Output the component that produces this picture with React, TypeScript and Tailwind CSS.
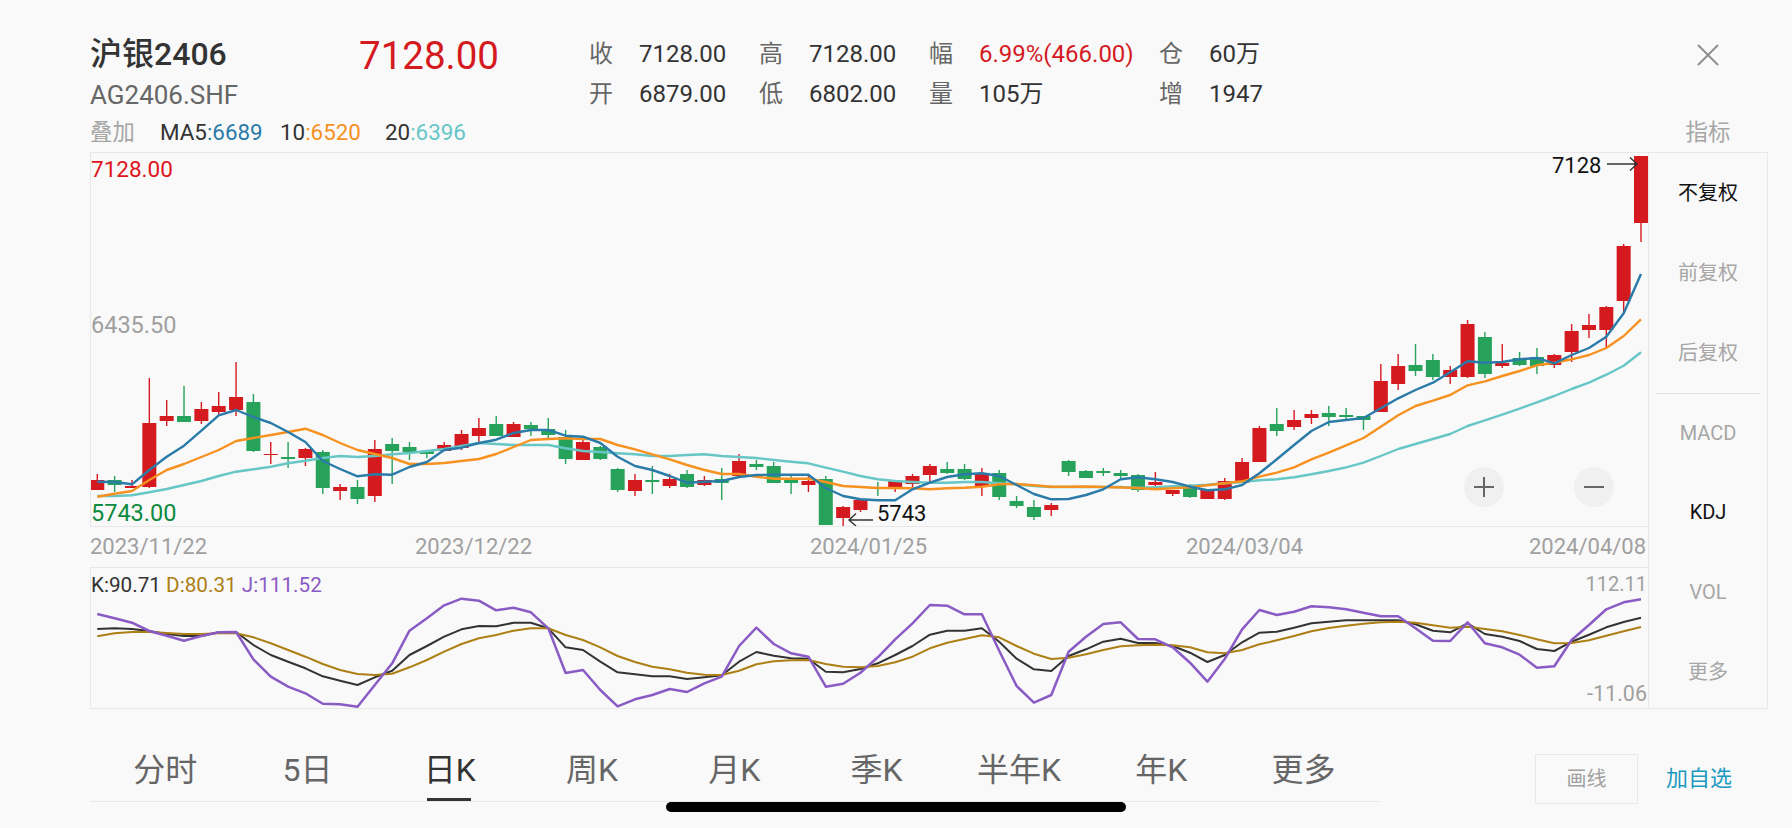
import React from 'react';

// [high, bodyTop, bodyBottom, low, 1 = red / 0 = green], y in page pixels
const candles: number[][] = [
  [474, 480, 490, 490, 1], [476, 480, 485, 492, 0], [480, 486, 488, 488, 1], [378, 423, 487, 488, 1],
  [400, 416, 421, 426, 1], [386, 416, 422, 422, 0], [402, 409, 421, 424, 1], [392, 406, 412, 416, 1],
  [362, 397, 410, 416, 1], [394, 402, 451, 452, 0], [442, 454, 455, 464, 1], [442, 457, 459, 468, 0],
  [448, 449, 458, 466, 1], [450, 452, 488, 494, 0], [484, 487, 491, 500, 1], [480, 487, 499, 504, 0],
  [440, 449, 496, 502, 1], [438, 444, 451, 484, 0], [442, 447, 452, 460, 0], [451, 451, 454, 458, 0],
  [442, 445, 451, 451, 1], [430, 434, 448, 450, 1], [418, 428, 436, 442, 1], [416, 424, 436, 436, 0],
  [422, 424, 437, 437, 1], [422, 425, 429, 436, 0], [418, 429, 435, 438, 0], [430, 437, 459, 464, 0],
  [440, 442, 460, 460, 1], [446, 447, 459, 460, 0], [468, 469, 490, 492, 0], [474, 480, 491, 496, 1],
  [466, 480, 482, 494, 0], [474, 479, 486, 488, 1], [470, 474, 487, 488, 0], [476, 480, 485, 486, 1],
  [468, 479, 483, 500, 0], [454, 461, 476, 476, 1], [460, 464, 467, 470, 0], [462, 466, 483, 483, 0],
  [475, 479, 483, 494, 0], [475, 481, 485, 492, 1], [476, 479, 525, 525, 0], [506, 507, 518, 526, 1],
  [499, 500, 510, 512, 1], [482, 487, 489, 496, 0], [480, 481, 488, 492, 1], [474, 476, 484, 490, 1],
  [464, 466, 475, 482, 1], [462, 469, 473, 474, 0], [464, 469, 479, 480, 0], [468, 473, 486, 496, 1],
  [470, 473, 497, 500, 0], [496, 501, 506, 508, 0], [500, 507, 517, 520, 0], [503, 505, 510, 516, 1],
  [460, 461, 472, 476, 0], [470, 471, 478, 478, 0], [468, 471, 473, 476, 0], [470, 473, 476, 480, 0],
  [474, 475, 490, 492, 0], [472, 482, 485, 487, 1], [490, 490, 494, 496, 1], [484, 486, 497, 498, 0],
  [490, 490, 499, 499, 1], [478, 481, 499, 500, 1], [458, 462, 483, 483, 1], [426, 428, 462, 462, 1],
  [408, 424, 431, 436, 0], [410, 420, 427, 430, 1], [410, 414, 418, 424, 1], [406, 413, 417, 426, 0],
  [408, 415, 417, 419, 0], [416, 416, 420, 430, 0], [364, 381, 412, 412, 1], [354, 366, 384, 390, 1],
  [344, 365, 371, 376, 0], [354, 360, 377, 380, 0], [366, 370, 377, 384, 1], [320, 324, 377, 378, 1],
  [332, 337, 374, 378, 0], [344, 363, 366, 368, 1], [352, 358, 365, 366, 0], [348, 357, 366, 374, 0],
  [354, 355, 365, 368, 1], [324, 331, 352, 362, 1], [314, 325, 330, 338, 1], [306, 307, 330, 348, 1],
  [244, 246, 301, 312, 1], [156, 156, 223, 242, 1],
];

const ma5 = [
  481.7, 482, 484.3, 470, 456.7, 445.7, 430.7, 415.3, 410, 417, 423, 432, 442, 461, 469, 476.3, 474.3, 474.7, 467, 462,
  450, 447.7, 443, 439.7, 433, 430, 430, 435.7, 436.7, 443, 456.7, 466, 470, 476, 482.7, 481.7, 481, 477, 475, 474.7,
  474.7, 474.7, 488, 496, 499.3, 500.3, 500.3, 489.3, 482.7, 477, 474.3, 473.3, 476, 485, 494, 499.3, 499, 495, 489.3,
  479.3, 477.3, 479.3, 482, 486.7, 490.3, 489.3, 485, 473.3, 459.3, 445, 431, 422, 420, 418, 408.3, 398.3, 390, 382.7,
  372.3, 361.3, 362.7, 362, 359.3, 358, 363.3, 355, 348, 336.7, 313.3, 274,
];
const ma10 = [
  496.7, 493.7, 491, 480, 470, 464, 457, 450, 441, 438, 435, 432, 428.7, 435, 443, 450, 454, 458, 464, 464, 463, 461,
  459, 454, 447, 440, 439, 438.3, 439, 439, 445, 449.3, 454.3, 459.3, 465, 470, 474, 474, 476.7, 478.7, 478.7, 478.7,
  482, 486, 487, 488, 488, 488.3, 489.3, 488.3, 487.7, 486.7, 484.3, 484, 485.3, 486.7, 486.7, 486.5, 487, 487.5, 488,
  489.3, 488.3, 487.3, 485.3, 483.3, 481.3, 476.7, 472.7, 467.3, 459.3, 452.7, 445.3, 438, 426.7, 415.3, 406, 400.7,
  395, 385.3, 381.3, 376, 371, 365.3, 362.7, 359.3, 355, 348, 336, 319.3,
];
const ma20 = [
  496, 496, 495.3, 492.3, 489, 485, 481, 476, 471.7, 469.3, 466.7, 463.3, 460.7, 458, 456, 457, 456, 454.3, 453, 451,
  449, 446, 443, 444, 445, 445, 445, 448.3, 451, 452, 453.3, 454.3, 456, 456, 455, 454.3, 456, 457, 458, 460, 461.7,
  463.3, 467.7, 471.7, 476, 479.3, 481, 482, 482.7, 482.7, 482, 482, 483.3, 484.3, 486, 487, 487, 487, 487, 487, 488,
  487.3, 486.3, 485.7, 484.7, 483.3, 482, 480.3, 479.3, 477.3, 474.3, 471, 467.3, 462.7, 456, 449, 444, 439, 434, 426,
  420.3, 414.7, 408.7, 402.3, 396, 389, 382.7, 374.7, 365.7, 352.3,
];

// KDJ values as offsets from y=560, three to a pixel
const kLine = [
  207, 205, 207, 213, 222, 228, 228, 217, 216, 255, 285, 305, 325, 349, 362, 375, 352, 332, 285, 258, 230, 208, 198,
  199, 188, 188, 205, 262, 270, 305, 337, 343, 349, 349, 357, 352, 346, 305, 276, 287, 295, 296, 335, 337, 327, 310,
  285, 258, 224, 212, 212, 205, 245, 296, 328, 333, 288, 268, 245, 236, 249, 249, 258, 278, 306, 285, 247, 218, 215,
  203, 190, 185, 181, 181, 181, 181, 193, 212, 217, 190, 222, 230, 243, 267, 273, 245, 224, 202, 186, 173,
];
const dLine = [
  229, 220, 216, 216, 219, 222, 222, 220, 220, 232, 250, 270, 290, 312, 330, 342, 345, 341, 322, 300, 275, 252, 235,
  225, 212, 205, 205, 225, 240, 262, 288, 306, 320, 328, 338, 344, 345, 332, 313, 304, 301, 300, 312, 320, 322, 318,
  307, 290, 265, 248, 237, 226, 232, 258, 281, 297, 293, 283, 270, 259, 256, 254, 256, 262, 277, 280, 270, 253, 241,
  228, 214, 204, 197, 191, 187, 185, 188, 196, 203, 200, 207, 214, 225, 238, 250, 249, 241, 227, 214, 201,
];
const jLine = [
  162, 175, 188, 213, 227, 242, 228, 217, 216, 298, 350, 380, 400, 431, 433, 440, 375, 310, 212, 175, 136, 116, 122,
  151, 143, 157, 205, 339, 330, 390, 439, 418, 405, 387, 396, 370, 350, 258, 203, 252, 280, 290, 380, 371, 338, 292,
  238, 190, 135, 137, 163, 163, 272, 378, 428, 405, 275, 230, 192, 187, 237, 238, 262, 308, 365, 297, 208, 150, 165,
  155, 139, 142, 148, 158, 169, 169, 205, 242, 243, 187, 250, 262, 284, 323, 319, 240, 195, 148, 127, 118,
];

const xAt = (i: number) => 97.3 + 17.345 * i;
const toPoints = (ys: number[]) => ys.map((y, i) => `${xAt(i).toFixed(1)},${y}`).join(' ');
const toKdjPoints = (ys: number[]) => ys.map((v, i) => `${xAt(i).toFixed(1)},${(560 + v / 3).toFixed(1)}`).join(' ');

const stats = [
  ['收', '7128.00'], ['高', '7128.00'], ['幅', '6.99%(466.00)'], ['仓', '60万'],
  ['开', '6879.00'], ['低', '6802.00'], ['量', '105万'], ['增', '1947'],
];
const dates = ['2023/11/22', '2023/12/22', '2024/01/25', '2024/03/04', '2024/04/08'];
const tabs = ['分时', '5日', '日K', '周K', '月K', '季K', '半年K', '年K', '更多'];

const PriceChart: React.FC = () => (
  <svg viewBox="91 153 1557 373" className="absolute inset-0 h-full w-full">
    {candles.map(([hi, top, bot, lo, up], i) => {
      const color = up ? '#d41a1f' : '#27a25b';
      const x = xAt(i);
      return (
        <g key={i}>
          <line x1={x} x2={x} y1={hi} y2={lo} stroke={color} strokeWidth={1.4} />
          <rect x={x - 7} y={top} width={14} height={Math.max(bot - top, 1)} fill={color} />
        </g>
      );
    })}
    <polyline points={toPoints(ma20)} fill="none" stroke="#67c6c6" strokeWidth={2.4} strokeLinejoin="round" />
    <polyline points={toPoints(ma10)} fill="none" stroke="#f7911f" strokeWidth={2.4} strokeLinejoin="round" />
    <polyline points={toPoints(ma5)} fill="none" stroke="#2a7ba8" strokeWidth={2.4} strokeLinejoin="round" />
    <path d="M1607 164H1637M1630 157.500L1637 164L1630 170.500" fill="none" stroke="#333" strokeWidth={1.4} />
    <path d="M873 520H849M856 513.500L849 520L856 526" fill="none" stroke="#333" strokeWidth={1.4} />
  </svg>
);

const KdjChart: React.FC = () => (
  <svg viewBox="91 568 1557 140" className="absolute inset-0 h-full w-full">
    <polyline points={toKdjPoints(kLine)} fill="none" stroke="#333333" strokeWidth={2} strokeLinejoin="round" />
    <polyline points={toKdjPoints(dLine)} fill="none" stroke="#ad7f14" strokeWidth={2} strokeLinejoin="round" />
    <polyline points={toKdjPoints(jLine)} fill="none" stroke="#8a5bc4" strokeWidth={2.5} strokeLinejoin="round" />
  </svg>
);

const App: React.FC = () => {
  return (
    <div className="relative flex h-[828px] w-[1792px] flex-col overflow-hidden bg-[#f9f9f9] pl-[90px] pr-[24px] font-['Roboto','Noto_Sans_CJK_SC',sans-serif] text-[#333]">
      {/* header */}
      <div className="flex h-[113px] shrink-0">
        <div className="w-[269px] shrink-0 pt-[32px]">
          <div className="text-[32px] leading-[44px] font-medium">沪银2406</div>
          <div className="mt-[1px] text-[26px] leading-[36px] text-[#666]">AG2406.SHF</div>
        </div>
        <div className="w-[230px] shrink-0 pt-[32px] text-[38.500px] leading-[48px] text-[#d41a1f]">7128.00</div>
        <div className="grid grid-cols-[50px_120px_50px_120px_50px_180px_50px_100px] grid-rows-[40px_40px] pt-[34px] text-[24px] leading-[40px]">
          {stats.map(([label, value]) => (
            <React.Fragment key={label}>
              <span className="text-[#666]">{label}</span>
              <span className={label === '幅' ? 'whitespace-nowrap text-[#d41a1f]' : 'whitespace-nowrap'}>{value}</span>
            </React.Fragment>
          ))}
        </div>
        <div className="ml-auto flex w-[120px] shrink-0 justify-center pt-[43px]">
          <svg width="24" height="24" viewBox="0 0 24 24" fill="none" stroke="#8c8c8c" strokeWidth="1.8">
            <path d="M2 2L22 22M22 2L2 22" />
          </svg>
        </div>
      </div>

      {/* MA legend */}
      <div className="flex h-[39px] shrink-0 items-center text-[22.400px]">
        <span className="w-[70px] text-[#a6a6a6]">叠加</span>
        <span className="w-[120px]">MA5<span className="text-[#2a7ba8]">:6689</span></span>
        <span className="w-[105px]">10<span className="text-[#f7911f]">:6520</span></span>
        <span>20<span className="text-[#67c6c6]">:6396</span></span>
        <span className="ml-auto w-[120px] text-center text-[#a6a6a6]">指标</span>
      </div>

      <div className="flex shrink-0">
        <div className="w-[1558px] shrink-0">
          {/* price chart */}
          <div className="relative h-[375px] border-y border-l border-[#e8e8e8]">
            <PriceChart />
            <span className="absolute left-0 top-[2px] text-[22.500px] leading-[28px] text-[#e0141c]">7128.00</span>
            <span className="absolute left-0 top-[158px] text-[23.500px] leading-[28px] text-[#a0a0a0]">6435.50</span>
            <span className="absolute left-0 top-[346px] text-[23.500px] leading-[28px] text-[#0e8a3e]">5743.00</span>
            <span className="absolute left-[1461px] top-[-1px] text-[22px] leading-[28px] text-[#111]">7128</span>
            <span className="absolute left-[786px] top-[347px] text-[22px] leading-[28px] text-[#111]">5743</span>
            <div className="absolute left-[1373px] top-[314px] flex h-[40px] w-[40px] items-center justify-center rounded-full bg-[#f0f0f0]">
              <svg width="20" height="20" viewBox="0 0 20 20" stroke="#666" strokeWidth="2"><path d="M10 0V20M0 10H20" /></svg>
            </div>
            <div className="absolute left-[1483px] top-[314px] flex h-[40px] w-[40px] items-center justify-center rounded-full bg-[#f0f0f0]">
              <svg width="20" height="20" viewBox="0 0 20 20" stroke="#666" strokeWidth="2"><path d="M0 10H20" /></svg>
            </div>
          </div>

          {/* dates */}
          <div className="relative h-[40px] text-[22px] leading-[40px] text-[#a0a0a0]">
            <div className="grid grid-cols-[325px_395px_376px_343px_auto]">
              {dates.map((d) => (
                <span key={d}>{d}</span>
              ))}
            </div>
          </div>

          {/* KDJ */}
          <div className="relative h-[142px] border-y border-l border-[#e8e8e8]">
            <KdjChart />
            <div className="absolute left-0 top-[4px] text-[20.700px] leading-[26px]">
              K:90.71 <span className="text-[#ad7f14]">D:80.31</span> <span className="text-[#8a5bc4]">J:111.52</span>
            </div>
            <span className="absolute right-[1px] top-[3px] text-[20px] leading-[26px] text-[#a0a0a0]">112.11</span>
            <span className="absolute right-[1px] top-[113px] text-[21.500px] leading-[26px] text-[#a0a0a0]">-11.06</span>
          </div>
        </div>

        {/* side menu */}
        <div className="flex h-[557px] w-[120px] shrink-0 flex-col border border-[#e8e8e8] text-[20px] text-[#a6a6a6]">
          <div className="flex h-[80px] shrink-0 items-center justify-center text-[#111]">不复权</div>
          <div className="flex h-[80px] shrink-0 items-center justify-center">前复权</div>
          <div className="flex h-[80px] shrink-0 items-center justify-center">后复权</div>
          <div className="mx-[7px] h-[1px] shrink-0 bg-[#e0e0e0]" />
          <div className="flex h-[78px] shrink-0 items-center justify-center">MACD</div>
          <div className="flex h-[80px] shrink-0 items-center justify-center text-[#111]">KDJ</div>
          <div className="flex h-[80px] shrink-0 items-center justify-center">VOL</div>
          <div className="flex h-[80px] shrink-0 items-center justify-center">更多</div>
        </div>
      </div>

      {/* bottom tabs */}
      <div className="flex">
        <div className="flex h-[93px] w-[1290px] shrink-0 border-b border-[#e8e8e8] pl-[4px]">
          {tabs.map((t) => (
            <div
              key={t}
              className={
                t === '日K'
                  ? 'relative flex w-[142.300px] shrink-0 items-center justify-center pt-[30px] text-[32px] text-[#333]'
                  : 'relative flex w-[142.300px] shrink-0 items-center justify-center pt-[30px] text-[32px] text-[#666]'
              }
            >
              {t}
              {t === '日K' && <div className="absolute bottom-0 left-[48px] h-[3px] w-[44px] bg-[#333]" />}
            </div>
          ))}
        </div>
        <div className="ml-[155px] mt-[45px] flex h-[50px] w-[103px] shrink-0 items-center justify-center border border-[#e8e8e8] text-[20px] text-[#a0a0a0]">
          画线
        </div>
        <div className="ml-[28px] mt-[53px] text-[22px] leading-[34px] text-[#1c9ac0]">加自选</div>
      </div>

      {/* home indicator */}
      <div className="absolute left-[666px] top-[802px] h-[10px] w-[460px] rounded-full bg-black" />
    </div>
  );
};

export default App;
